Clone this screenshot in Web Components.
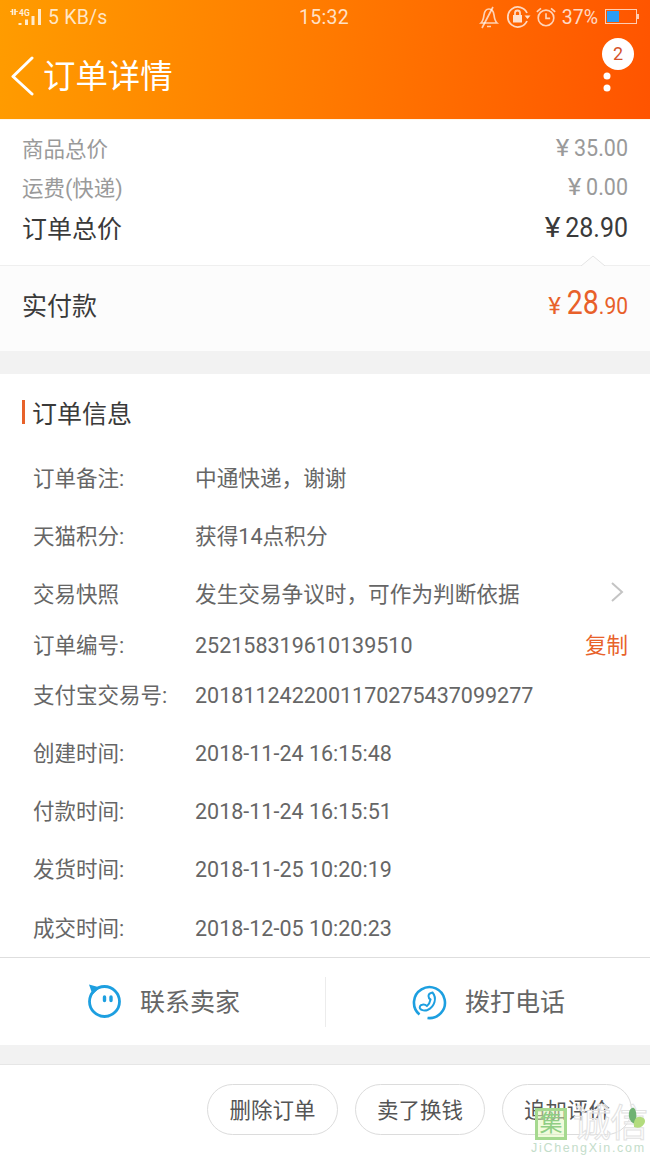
<!DOCTYPE html>
<html lang="zh">
<head>
<meta charset="utf-8">
<title>订单详情</title>
<style>
  html, body { margin: 0; padding: 0; }
  body {
    width: 650px;
    height: 1155px;
    overflow: hidden;
    position: relative;
    background: #fff;
    font-family: Roboto, "Noto Sans CJK SC", sans-serif;
  }
</style>
</head>
<body>
  <app-header title="订单详情" badge="2"></app-header>

  <price-summary>
    <price-row label="商品总价" value="35.00"></price-row>
    <price-row label="运费(快递)" value="0.00"></price-row>
    <price-row label="订单总价" value="28.90" strong></price-row>
  </price-summary>
  <pay-row label="实付款" whole="28" cents=".90"></pay-row>

  <info-section title="订单信息">
    <info-row label="订单备注:" h="58" raised>中通快递，谢谢</info-row>
    <info-row label="天猫积分:" h="58" raised>获得14点积分</info-row>
    <info-row label="交易快照" h="58" raised arrow>发生交易争议时，可作为判断依据</info-row>
    <info-row label="订单编号:" h="44" action="复制">252158319610139510</info-row>
    <info-row label="支付宝交易号:" h="57">2018112422001170275437099277</info-row>
    <info-row label="创建时间:" h="58">2018-11-24 16:15:48</info-row>
    <info-row label="付款时间:" h="58">2018-11-24 16:15:51</info-row>
    <info-row label="发货时间:" h="59">2018-11-25 10:20:19</info-row>
    <info-row label="成交时间:" h="58">2018-12-05 10:20:23</info-row>
  </info-section>

  <contact-bar></contact-bar>

  <action-bar>
    <pill-button>删除订单</pill-button>
    <pill-button>卖了换钱</pill-button>
    <pill-button>追加评价</pill-button>
  </action-bar>

  <site-watermark></site-watermark>

<script>
const CJK = 'Roboto, "Noto Sans CJK SC", sans-serif';

class AppHeader extends HTMLElement {
  connectedCallback() {
    this.attachShadow({ mode: 'open' });
    this.shadowRoot.innerHTML = `
      <style>
        :host{display:block;box-sizing:border-box;height:120px;background:linear-gradient(96deg,#ff9c00 0%,#ff7a00 50%,#ff5400 100%);
          color:#fff;font-family:${CJK};border-bottom:1px solid #fff6e8;position:relative}
        .status{height:34px;display:grid;grid-template-columns:1fr auto 1fr;align-items:center;padding:0 11px 0 8px;
          font-size:19.500px;color:rgba(255,255,255,.78)}
        .left{display:flex;align-items:center}
        .speed{margin-left:4px;letter-spacing:.2px}
        .time{letter-spacing:.3px;margin-left:1px}
        .icons{display:flex;align-items:center;justify-content:flex-end;gap:4px}
        .pct{margin:0 3px 0 1px}
        .nav{height:85px;display:flex;align-items:center}
        .back{width:24px;height:40px;margin:0 0 0 11px;flex:none;position:relative;top:-1px}
        h1{margin:0 0 0 8px;font-size:32.400px;font-weight:400;line-height:44px}
        .more{position:absolute;left:601px;top:68px}
        .badge{position:absolute;left:602px;top:38px;width:32px;height:32px;border-radius:50%;background:#fff;
          color:#d5532a;font-size:18px;line-height:32px;text-align:center;font-family:Roboto,sans-serif}
      </style>
      <div class="status">
        <span class="left">
          <svg width="36" height="22" viewBox="0 0 36 22" fill="none">
            <path d="M2 5.500h2.400M7.500 5.500h2.400" stroke="#fff" stroke-width="1" opacity=".7"/>
            <path d="M4.500 3v6M7 3v6" stroke="#fff" stroke-width="1.600" opacity=".85"/>
            <text x="11" y="9.500" font-size="8.500" font-weight="700" fill="#fff" fill-opacity=".85" font-family="Roboto,sans-serif">4G</text>
            <path d="M12 19v-2M18.500 19v-5.500M25 19v-9M31.500 19V3" stroke="#fff" stroke-opacity=".8" stroke-width="3"/>
          </svg>
          <span class="speed">5 KB/s</span>
        </span>
        <span class="time">15:32</span>
        <span class="icons">
          <svg width="22" height="24" viewBox="0 0 22 24" fill="none" stroke="#fff" stroke-opacity=".7" stroke-width="1.700" style="margin-right:1px">
            <path d="M3 18c2-2 2.500-4 3-8s2.500-6 5-6 4.500 2 5 6 1 6 3 8z"/>
            <path d="M9 21.500h4M4 23 15 2"/>
          </svg>
          <svg width="28" height="24" viewBox="0 0 28 24" fill="none" stroke="#fff" stroke-opacity=".75" stroke-width="1.800">
            <path d="M22 8A10 10 0 1 0 22 16"/>
            <path d="M19.500 10.500h6l-3 3.500z" fill="#fff" fill-opacity=".8" stroke="none"/>
            <rect x="8" y="10" width="9" height="7.500" fill="#fff" fill-opacity=".8" stroke="none"/>
            <path d="M10 10V8a2.500 2.500 0 0 1 5 0v2"/>
          </svg>
          <svg width="22" height="24" viewBox="0 0 24 24" fill="none" stroke="#fff" stroke-opacity=".72" stroke-width="1.800" style="margin-left:-2px">
            <circle cx="12" cy="13" r="8.500"/>
            <path d="M12 8v5.500h4.500M2 6.500 6.500 2.500M22 6.500 17.500 2.500"/>
          </svg>
          <span class="pct">37%</span>
          <svg width="34" height="16" viewBox="0 0 34 16" fill="none">
            <rect x=".5" y=".5" width="31" height="14" stroke="#fff" stroke-opacity=".7" fill="none"/>
            <rect x="2" y="2" width="12" height="11" fill="#2a9df4"/>
            <rect x="32" y="5" width="2" height="5" fill="#fff" fill-opacity=".7"/>
          </svg>
        </span>
      </div>
      <div class="nav">
        <svg class="back" viewBox="0 0 24 40" fill="none" stroke="#fff" stroke-width="3" stroke-linecap="round" stroke-linejoin="round">
          <path d="M21 2 2 20.500 21 38"/>
        </svg>
        <h1>${this.getAttribute('title')}</h1>
      </div>
      <svg class="more" viewBox="0 0 12 26" width="12" height="26" fill="#fff">
        <circle cx="6" cy="8" r="3.500"/><circle cx="6" cy="20" r="3.500"/>
      </svg>
      <div class="badge">${this.getAttribute('badge')}</div>`;
  }
}

class PriceSummary extends HTMLElement {
  constructor() {
    super();
    this.attachShadow({ mode: 'open' });
    this.shadowRoot.innerHTML = `
      <style>
        :host{display:block;height:137px;padding-top:8px;position:relative;background:#fff;border-bottom:1px solid #efefef}
        svg{position:absolute;left:580px;bottom:-1px}
      </style>
      <slot></slot>
      <svg width="26" height="11" viewBox="0 0 26 11" fill="#fcfcfc" stroke="#e4e4e4"><path d="M1 11 13 1l12 10"/></svg>`;
  }
}

class PriceRow extends HTMLElement {
  connectedCallback() {
    const strong = this.hasAttribute('strong');
    this.attachShadow({ mode: 'open' });
    this.shadowRoot.innerHTML = `
      <style>
        :host{display:flex;justify-content:space-between;align-items:center;padding:0 22px;
          height:${strong ? 42 : 39}px;font-family:${CJK};
          font-size:${strong ? 25 : 21.5}px;color:${strong ? '#3a3a3a' : '#9a9a9a'}}
        .num{display:inline-block;transform:scaleY(1.14)}
        .y{display:inline-block;transform:scaleX(1.2);margin-right:6px}
      </style>
      <span>${this.getAttribute('label')}</span>
      <span class="num"><span class="y">¥</span>${this.getAttribute('value')}</span>`;
  }
}

class PayRow extends HTMLElement {
  connectedCallback() {
    this.attachShadow({ mode: 'open' });
    this.shadowRoot.innerHTML = `
      <style>
        :host{display:flex;justify-content:space-between;align-items:center;height:75px;padding:0 22px 10px;
          background:#fcfcfc;font-family:${CJK};font-size:25px;color:#3a3a3a}
        .amount{color:#e8602a;display:flex;align-items:baseline;font-size:21px;transform:scaleY(1.14)}
        .y{display:inline-block;transform:scaleX(1.15);margin-right:7px}
        .big{font-size:28.500px}
      </style>
      <span>${this.getAttribute('label')}</span>
      <span class="amount"><span class="y">¥</span><span class="big">${this.getAttribute('whole')}</span><span>${this.getAttribute('cents')}</span></span>`;
  }
}

class InfoSection extends HTMLElement {
  connectedCallback() {
    this.attachShadow({ mode: 'open' });
    this.shadowRoot.innerHTML = `
      <style>
        :host{display:block;margin-top:23px;position:relative;background:#fff;height:583px;
          box-shadow:0 -23px 0 #f2f2f2;border-bottom:1px solid #dedede;font-family:${CJK}}
        .head{height:75px;display:flex;align-items:center;padding-left:22px;font-size:25px;color:#3a3a3a}
        .bar{width:3px;height:24px;background:#e8622a;margin-right:7px}
      </style>
      <div class="head"><span class="bar"></span>${this.getAttribute('title')}</div>
      <slot></slot>`;
  }
}

class InfoRow extends HTMLElement {
  connectedCallback() {
    const action = this.getAttribute('action');
    const arrow = this.hasAttribute('arrow');
    const raised = this.hasAttribute('raised');
    this.attachShadow({ mode: 'open' });
    this.shadowRoot.innerHTML = `
      <style>
        :host{display:flex;align-items:center;height:${this.getAttribute('h')}px;padding:0 22px 0 33px;
          font-size:21.500px;color:#666;font-family:${CJK}}
        .label{width:162px;flex:none;white-space:nowrap;margin-bottom:4px}
        .value{flex:1;white-space:nowrap;${raised ? 'margin-bottom:4px;font-size:21.650px;' : ''}}
        .action{color:#e8622a;margin-bottom:4px}
        svg{margin:0 4px 4px 0}
      </style>
      <span class="label">${this.getAttribute('label')}</span>
      <span class="value"><slot></slot></span>
      ${action ? `<span class="action">${action}</span>` : ''}
      ${arrow ? `<svg width="14" height="22" viewBox="0 0 14 22" fill="none" stroke="#c4c4c4" stroke-width="2"><path d="M2 2l10 9-10 9"/></svg>` : ''}`;
  }
}

class ContactBar extends HTMLElement {
  constructor() {
    super();
    this.attachShadow({ mode: 'open' });
    this.shadowRoot.innerHTML = `
      <style>
        :host{display:flex;height:87px;background:#fff;font-family:${CJK};font-size:25px;color:#666;
          border-bottom:19px solid #f2f2f2}
        .cell{flex:1;display:flex;align-items:center;justify-content:center;gap:18px}
        .cell + .cell{border-left:1px solid #ececec;margin:19px 0 18px}
        .first{padding-left:2px}
        .second{padding-left:1px}
        span{position:relative;top:-2px}
      </style>
      <div class="cell first">
        <svg width="35" height="35" viewBox="0 0 35 35" fill="none" stroke="#1d9fe0" stroke-width="2.800">
          <circle cx="17.500" cy="17.500" r="15"/>
          <path d="M2 .5 13 3.500 5.500 10.500z" fill="#1d9fe0" stroke="none"/>
          <path d="M17.500 13v3.500M24 13v3.500" stroke-width="3.400" stroke-linecap="round"/>
        </svg>
        <span>联系卖家</span>
      </div>
      <div class="cell second">
        <svg width="35" height="35" viewBox="0 0 35 35" fill="none" stroke="#1d9fe0" stroke-width="2.600">
          <path d="M7.500 29.500A15.500 15.500 0 1 1 15.500 33"/>
          <path d="M20.500 7.500c2.500 3 3 6 2 9.500-1 3.500-3.500 6.500-7 8-2.500 1-6.500.5-7.500-1.500-.8-1.700.4-3.500 2.300-3.800 1.500-.3 3.700.4 4.700 1.300 2-1.500 3-4 3.500-6.500-1.300-.7-2-2-2-3.500 0-1.800 1.500-3 4-3.500z" stroke-width="2"/>
        </svg>
        <span>拨打电话</span>
      </div>`;
  }
}

class ActionBar extends HTMLElement {
  constructor() {
    super();
    this.attachShadow({ mode: 'open' });
    this.shadowRoot.innerHTML = `
      <style>
        :host{display:flex;justify-content:flex-end;gap:17px;padding:19px 18px 0 0;height:71px;
          border-top:1px solid #e6e6e6;background:#fff}
      </style>
      <slot></slot>`;
  }
}

class PillButton extends HTMLElement {
  constructor() {
    super();
    this.attachShadow({ mode: 'open' });
    this.shadowRoot.innerHTML = `
      <style>
        :host{display:flex;align-items:center;justify-content:center;box-sizing:border-box;width:130px;height:51px;
          border:1px solid #dcdcdc;border-radius:26px;font-family:${CJK};font-size:21.500px;color:#555;padding-bottom:2px}
        :host(:first-child){width:131px}
      </style>
      <slot></slot>`;
  }
}

class SiteWatermark extends HTMLElement {
  constructor() {
    super();
    this.attachShadow({ mode: 'open' });
    this.shadowRoot.innerHTML = `
      <style>
        :host{position:absolute;left:531px;top:1103px;width:119px;height:52px;font-family:${CJK};pointer-events:none}
        .mark{position:absolute;left:4px;top:5px;width:32px;height:32px;box-sizing:border-box;border:3px solid #a5d98f;
          background:rgba(226,247,186,.5);color:#8fce84;font-size:23px;line-height:25px;text-align:center}
        .cn{position:absolute;left:42px;top:-2px;font-size:38px;line-height:44px;color:rgba(255,255,255,.6);
          -webkit-text-stroke:1px #e2e2e2;white-space:nowrap;letter-spacing:-1px}
        .leaf{position:absolute;left:97px;top:4px}
        .en{position:absolute;left:0;top:39px;font-size:12.500px;line-height:13px;letter-spacing:1.700px;color:#c4ddca;
          white-space:nowrap;font-family:"Liberation Sans",sans-serif}
      </style>
      <div class="mark">集</div>
      <div class="cn">诚信</div>
      <svg class="leaf" width="18" height="24" viewBox="0 0 18 24">
        <path d="M1 10C0 4 3 0 6 1c3 3 3 10 1 16-3-1-5-3-6-7z" fill="#6fb272"/>
        <path d="M6 20c-1-8 3-11 7-10 4 1 5 4 3 7-2 3-5 5-10 3z" fill="#b3dc7e"/>
      </svg>
      <div class="en">JiChengXin.com</div>`;
  }
}

customElements.define('app-header', AppHeader);
customElements.define('price-summary', PriceSummary);
customElements.define('price-row', PriceRow);
customElements.define('pay-row', PayRow);
customElements.define('info-section', InfoSection);
customElements.define('info-row', InfoRow);
customElements.define('contact-bar', ContactBar);
customElements.define('action-bar', ActionBar);
customElements.define('pill-button', PillButton);
customElements.define('site-watermark', SiteWatermark);
</script>
</body>
</html>
